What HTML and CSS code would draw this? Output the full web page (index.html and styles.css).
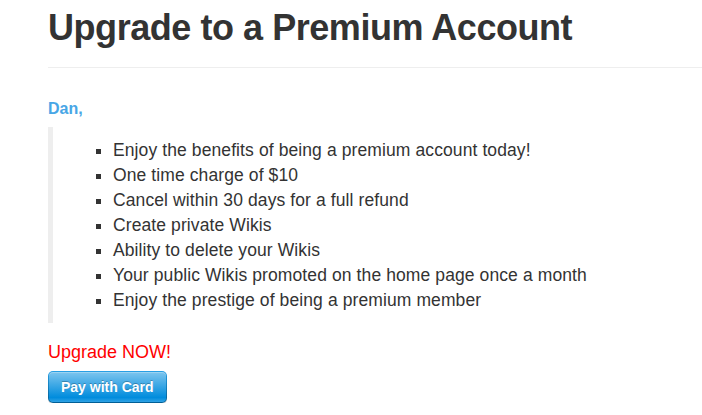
FILE: index.html
```html
<!DOCTYPE html>
<html>
<head>
<meta charset="utf-8">
<link rel="stylesheet" href="styles.css">
</head>
<body>
<div class="container">
  <div class="page-header">
    <h1 class="title">Upgrade to a Premium Account</h1>
  </div>
  <h4 class="greeting">Dan,</h4>
  <blockquote class="perks">
    <ul class="perk-list">
      <li>Enjoy the benefits of being a premium account today!</li>
      <li>One time charge of $10</li>
      <li>Cancel within 30 days for a full refund</li>
      <li>Create private Wikis</li>
      <li>Ability to delete your Wikis</li>
      <li>Your public Wikis promoted on the home page once a month</li>
      <li>Enjoy the prestige of being a premium member</li>
    </ul>
  </blockquote>
  <h4 class="cta">Upgrade NOW!</h4>
  <button class="stripe-button" type="button"><span class="stripe-label">Pay with Card</span></button>
</div>
</body>
</html>
```
FILE: styles.css
```css
html, body {
  margin: 0;
  padding: 0;
  background: #fff;
}
body {
  font-family: "Liberation Sans", Arial, sans-serif;
  font-size: 14px;
  line-height: 1.42857;
  color: #333;
}
.container {
  padding-left: 48px;
}
.page-header {
  border-bottom: 1px solid #eee;
  padding-bottom: 9px;
  margin: 0;
}
.title {
  margin: 8px 0 10px;
  font-size: 36px;
  font-weight: bold;
  letter-spacing: -0.45px;
  line-height: 1.1;
  color: #333;
}
.greeting {
  margin: 32px 0 10px;
  font-size: 16px;
  font-weight: bold;
  line-height: 1.1;
  color: #48a6e6;
}
.perks {
  margin: 0 0 20px;
  padding: 11px 20px 10px;
  border-left: 5px solid #eee;
  font-size: 17.5px;
  line-height: 25px;
}
.perk-list {
  margin: 0;
  padding-left: 40px;
  list-style: square;
  letter-spacing: 0.1px;
}
.cta {
  margin: 0 0 8px;
  font-size: 18px;
  font-weight: normal;
  line-height: 1.1;
  color: #ff0000;
}
.stripe-button {
  display: inline-block;
  padding: 1px;
  margin: 0;
  border: 0;
  border-radius: 5px;
  background: linear-gradient(#28a0e5, #015e94);
  box-shadow: 0 1px 0 rgba(0,0,0,.2);
  cursor: pointer;
  font-family: "Liberation Sans", Arial, sans-serif;
}
.stripe-label {
  display: block;
  height: 30px;
  line-height: 30px;
  padding: 0 12px;
  font-size: 14px;
  font-weight: bold;
  color: #fff;
  text-shadow: 0 -1px 0 rgba(0,0,0,.25);
  background: linear-gradient(#7dc5ee, #008cdd 85%, #30a2e4);
  border-radius: 4px;
  box-shadow: inset 0 1px 0 rgba(255,255,255,.25);
}
```
